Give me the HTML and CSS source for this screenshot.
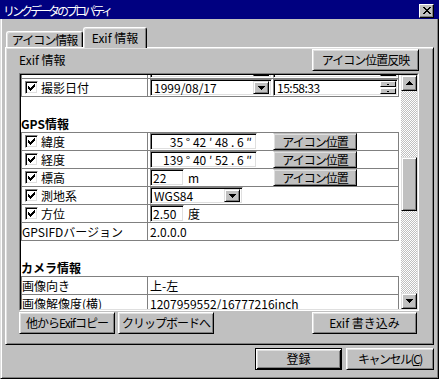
FILE: index.html
```html
<!DOCTYPE html>
<html lang="ja">
<head>
<meta charset="utf-8">
<title>リンクデータのプロパティ</title>
<link rel="stylesheet" href="styles.css">
</head>
<body>
<div class="title">
  <span class="title-text">リンクデータのプロパティ</span>
  <span class="close"><svg width="8" height="7" viewBox="0 0 8 7" shape-rendering="crispEdges"><path d="M0 0h2v1H0zM6 0h2v1H6zM1 1h2v1H1zM5 1h2v1H5zM2 2h4v1H2zM3 3h2v1H3zM2 4h4v1H2zM1 5h2v1H1zM5 5h2v1H5zM0 6h2v1H0zM6 6h2v1H6z" fill="#000"/></svg></span>
</div>
<div class="frame">
  <div class="tabs">
    <div class="tab">アイコン情報</div>
    <div class="tab tab-sel">Exif 情報</div>
  </div>
  <div class="panel">
    <div class="head">
      <span class="head-label">Exif 情報</span>
      <div class="btn btn-reflect">アイコン位置反映</div>
    </div>
    <div class="list">
      <div class="list-in">
        <div class="view">
          <div class="content">
            <div class="group">
              <div class="row">
                <div class="cl"></div>
                <div class="cr">
                  <div class="combo date"><span class="combo-text"></span><span class="dd"></span></div>
                  <div class="spin"><span class="spin-text"></span><span class="spin-btns"><span class="sbtn"><i></i></span><span class="sbtn"><i></i></span></span></div>
                </div>
              </div>
              <div class="row">
                <div class="cl"><span class="chk"><svg width="7" height="7" viewBox="0 0 7 7" shape-rendering="crispEdges"><path d="M6 0h1v1H6zM5 1h2v1H5zM0 2h1v1H0zM4 2h3v1H4zM0 3h2v1H0zM3 3h3v1H3zM0 4h5v1H0zM1 5h3v1H1zM2 6h1v1H2z" fill="#000"/></svg></span><span>撮影日付</span></div>
                <div class="cr">
                  <div class="combo date"><span class="combo-text">1999/08/17</span><span class="dd"><svg width="7" height="4" viewBox="0 0 7 4" shape-rendering="crispEdges"><path d="M0 0h7v1H0zM1 1h5v1H1zM2 2h3v1H2zM3 3h1v1H3z" fill="#000"/></svg></span></div>
                  <div class="spin"><span class="spin-text">15:58:33</span><span class="spin-btns"><span class="sbtn"><i></i></span><span class="sbtn"><i></i></span></span></div>
                </div>
              </div>
            </div>

            <div class="sect">GPS情報</div>

            <div class="group">
              <div class="row">
                <div class="cl"><span class="chk"><svg width="7" height="7" viewBox="0 0 7 7" shape-rendering="crispEdges"><path d="M6 0h1v1H6zM5 1h2v1H5zM0 2h1v1H0zM4 2h3v1H4zM0 3h2v1H0zM3 3h3v1H3zM0 4h5v1H0zM1 5h3v1H1zM2 6h1v1H2z" fill="#000"/></svg></span><span>緯度</span></div>
                <div class="cr">
                  <div class="edit coord">35 ° 42 ′ 48 . 6 ″</div>
                  <div class="btn btn-pos">アイコン位置</div>
                </div>
              </div>
              <div class="row">
                <div class="cl"><span class="chk"><svg width="7" height="7" viewBox="0 0 7 7" shape-rendering="crispEdges"><path d="M6 0h1v1H6zM5 1h2v1H5zM0 2h1v1H0zM4 2h3v1H4zM0 3h2v1H0zM3 3h3v1H3zM0 4h5v1H0zM1 5h3v1H1zM2 6h1v1H2z" fill="#000"/></svg></span><span>経度</span></div>
                <div class="cr">
                  <div class="edit coord">139 ° 40 ′ 52 . 6 ″</div>
                  <div class="btn btn-pos">アイコン位置</div>
                </div>
              </div>
              <div class="row">
                <div class="cl"><span class="chk"><svg width="7" height="7" viewBox="0 0 7 7" shape-rendering="crispEdges"><path d="M6 0h1v1H6zM5 1h2v1H5zM0 2h1v1H0zM4 2h3v1H4zM0 3h2v1H0zM3 3h3v1H3zM0 4h5v1H0zM1 5h3v1H1zM2 6h1v1H2z" fill="#000"/></svg></span><span>標高</span></div>
                <div class="cr">
                  <div class="alt-box"><div class="edit small">22</div><span class="unit">m</span></div>
                  <div class="btn btn-pos">アイコン位置</div>
                </div>
              </div>
              <div class="row">
                <div class="cl"><span class="chk"><svg width="7" height="7" viewBox="0 0 7 7" shape-rendering="crispEdges"><path d="M6 0h1v1H6zM5 1h2v1H5zM0 2h1v1H0zM4 2h3v1H4zM0 3h2v1H0zM3 3h3v1H3zM0 4h5v1H0zM1 5h3v1H1zM2 6h1v1H2z" fill="#000"/></svg></span><span>測地系</span></div>
                <div class="cr">
                  <div class="combo datum"><span class="combo-text">WGS84</span><span class="dd"><svg width="7" height="4" viewBox="0 0 7 4" shape-rendering="crispEdges"><path d="M0 0h7v1H0zM1 1h5v1H1zM2 2h3v1H2zM3 3h1v1H3z" fill="#000"/></svg></span></div>
                </div>
              </div>
              <div class="row">
                <div class="cl"><span class="chk"><svg width="7" height="7" viewBox="0 0 7 7" shape-rendering="crispEdges"><path d="M6 0h1v1H6zM5 1h2v1H5zM0 2h1v1H0zM4 2h3v1H4zM0 3h2v1H0zM3 3h3v1H3zM0 4h5v1H0zM1 5h3v1H1zM2 6h1v1H2z" fill="#000"/></svg></span><span>方位</span></div>
                <div class="cr">
                  <div class="edit small">2.50</div><span class="unit">度</span>
                </div>
              </div>
              <div class="row">
                <div class="cl plain">GPSIFDバージョン</div>
                <div class="cr">2.0.0.0</div>
              </div>
            </div>

            <div class="sect">カメラ情報</div>

            <div class="group">
              <div class="row">
                <div class="cl plain">画像向き</div>
                <div class="cr">上-左</div>
              </div>
              <div class="row">
                <div class="cl plain">画像解像度(横)</div>
                <div class="cr">1207959552/16777216inch</div>
              </div>
            </div>
          </div>
        </div>
        <div class="sb">
          <div class="sb-btn"><svg width="7" height="4" viewBox="0 0 7 4" shape-rendering="crispEdges"><path d="M3 0h1v1H3zM2 1h3v1H2zM1 2h5v1H1zM0 3h7v1H0z" fill="#000"/></svg></div>
          <div class="sb-gap"></div>
          <div class="thumb"></div>
          <div class="sb-fill"></div>
          <div class="sb-btn"><svg width="7" height="4" viewBox="0 0 7 4" shape-rendering="crispEdges"><path d="M0 0h7v1H0zM1 1h5v1H1zM2 2h3v1H2zM3 3h1v1H3z" fill="#000"/></svg></div>
        </div>
      </div>
    </div>
    <div class="foot">
      <div class="btn btn-foot">他からExifコピー</div>
      <div class="btn btn-foot">クリップボードへ</div>
      <div class="btn btn-write">Exif 書き込み</div>
    </div>
  </div>
  <div class="dlg">
    <div class="btn btn-def">登録</div>
    <div class="btn btn-cancel">キャンセル(<u>C</u>)</div>
  </div>
</div>
</body>
</html>
```
FILE: styles.css
```css
* { box-sizing: border-box; margin: 0; padding: 0; }
html, body { width: 439px; height: 379px; overflow: hidden; }
body {
  background: #c0c0c0;
  font-family: "Noto Sans CJK JP", "Noto Sans", sans-serif;
  font-size: 12px;
  line-height: 1;
  color: #000;
  display: flex;
  flex-direction: column;
}

.title {
  flex: none;
  height: 19px;
  background: #000080;
  color: #fff;
  display: flex;
  align-items: center;
  justify-content: space-between;
  padding: 2px 5px 0 3px;
}
.title-text { letter-spacing: -3px; line-height: 17px; }
.close {
  width: 15px;
  height: 14px;
  background: #c0c0c0;
  border: 1px solid;
  border-color: #fff #000 #000 #fff;
  box-shadow: inset -1px -1px #808080;
  display: flex;
  align-items: center;
  justify-content: center;
}

.frame {
  flex: 1;
  display: flex;
  flex-direction: column;
  border-left: 1px solid #dfdfdf;
  border-right: 1px solid #000;
  border-bottom: 1px solid #000;
  box-shadow: inset 1px 0 #fff, inset -1px -1px #808080;
  padding: 0 4px;
}

.tabs {
  flex: none;
  height: 28px;
  display: flex;
  align-items: flex-end;
  padding-left: 1px;
}
.tab {
  height: 16px;
  width: 77px;
  border: 1px solid;
  border-bottom: 0;
  border-color: #fff #000 #000 #fff;
  border-radius: 3px 3px 0 0;
  box-shadow: inset 1px 1px #dfdfdf, inset -1px 0 #808080;
  display: flex;
  align-items: center;
  justify-content: center;
  letter-spacing: -1px;
}
.tab-sel {
  height: 21px;
  width: 64px;
  margin-bottom: -1px;
  position: relative;
  z-index: 1;
  background: #c0c0c0;
  letter-spacing: 0;
  padding-bottom: 1px;
}

.panel {
  flex: none;
  height: 298px;
  border: 1px solid;
  border-color: #fff #000 #000 #fff;
  box-shadow: inset 1px 1px #dfdfdf, inset -1px -1px #808080;
  padding: 1px 14px 10px 13px;
  display: flex;
  flex-direction: column;
}

.head {
  height: 22px;
  display: flex;
  align-items: center;
  justify-content: space-between;
}

.btn {
  background: #c0c0c0;
  border: 1px solid;
  border-color: #fff #000 #000 #fff;
  box-shadow: inset 1px 1px #dfdfdf, inset -1px -1px #808080;
  display: flex;
  align-items: center;
  justify-content: center;
  white-space: nowrap;
}
.btn-reflect { width: 107px; height: 22px; letter-spacing: -1px; }

.list {
  margin-top: 2px;
  height: 238px;
  border: 1px solid;
  border-color: #808080 #fff #fff #808080;
}
.list-in {
  height: 100%;
  border: 1px solid;
  border-color: #000 #dfdfdf #dfdfdf #000;
  background: #fff;
  display: flex;
}
.view { width: 380px; overflow: hidden; }
.content { margin-top: -15px; }

.group { width: 378px; border-top: 1px solid #808080; }
.row {
  height: 18px;
  display: flex;
  border-bottom: 1px solid #808080;
}
.cl {
  width: 127px;
  flex: none;
  border-left: 1px solid #808080;
  border-right: 1px solid #808080;
  display: flex;
  align-items: center;
  gap: 3px;
  white-space: nowrap;
}
.cl.plain { padding-left: 0; }
.cr {
  flex: 1;
  border-right: 1px solid #808080;
  display: flex;
  align-items: center;
  padding-left: 2px;
  white-space: nowrap;
}

.chk {
  width: 13px;
  height: 13px;
  margin-left: 3px;
  flex: none;
  background: #fff;
  border: 1px solid;
  border-color: #808080 #fff #fff #808080;
  box-shadow: inset 1px 1px #000, inset -1px -1px #dfdfdf;
  display: flex;
  align-items: center;
  justify-content: center;
}

.sect {
  height: 35px;
  padding-top: 18px;
  line-height: 17px;
  font-weight: bold;
}

.edit, .combo, .spin {
  height: 17px;
  background: #fff;
  border: 1px solid;
  border-color: #808080 #fff #fff #808080;
  box-shadow: inset 1px 1px #000, inset -1px -1px #dfdfdf;
  display: flex;
  align-items: center;
}
.edit { padding: 0 2px; }
.coord { width: 107px; justify-content: flex-end; padding-right: 4px; }
.small { width: 34px; }
.unit { margin-left: 4px; }
.alt-box { width: 107px; flex: none; display: flex; align-items: center; }

.btn-pos {
  width: 84px;
  height: 17px;
  margin-left: 16px;
  border-top-color: #c0c0c0;
  letter-spacing: -1px;
}

.combo { padding: 2px; }
.combo-text { flex: 1; padding-left: 1px; }
.date { width: 122px; }
.datum { width: 93px; }
.dd {
  width: 16px;
  height: 13px;
  flex: none;
  background: #c0c0c0;
  border: 1px solid;
  border-color: #dfdfdf #000 #000 #dfdfdf;
  box-shadow: inset 1px 1px #fff, inset -1px -1px #808080;
  display: flex;
  align-items: center;
  justify-content: center;
}

.spin { width: 125px; margin-left: 1px; padding: 2px 1px 2px 2px; }
.spin-text { flex: 1; padding-left: 1px; letter-spacing: -0.5px; }
.spin-btns {
  width: 16px;
  height: 13px;
  display: flex;
  flex-direction: column;
  justify-content: space-between;
}
.sbtn {
  height: 6px;
  background: #c0c0c0;
  border: 1px solid;
  border-color: #fff #000 #000 #fff;
  display: flex;
  align-items: center;
  justify-content: center;
}
.sbtn i { width: 2px; height: 1px; background: #000; display: block; }

.sb {
  width: 16px;
  display: flex;
  flex-direction: column;
  background: repeating-conic-gradient(#c0c0c0 0 25%, #fff 0 50%) 0 0 / 2px 2px;
}
.sb-btn, .thumb {
  background: #c0c0c0;
  border: 1px solid;
  border-color: #dfdfdf #000 #000 #dfdfdf;
  box-shadow: inset 1px 1px #fff, inset -1px -1px #808080;
}
.sb-btn {
  height: 16px;
  display: flex;
  align-items: center;
  justify-content: center;
}
.sb-gap { height: 66px; }
.thumb { height: 54px; }
.sb-fill { flex: 1; }

.foot {
  margin-top: 1px;
  height: 22px;
  display: flex;
  gap: 3px;
}
.btn-foot { width: 96px; letter-spacing: -1px; }
.btn-write { width: 105px; margin-left: auto; margin-right: 2px; }

.dlg {
  margin-top: 3px;
  display: flex;
  justify-content: flex-end;
  gap: 4px;
}
.dlg .btn { height: 22px; }
.btn-def {
  width: 87px;
  border-color: #000;
  box-shadow: inset 1px 1px #fff, inset -1px -1px #000, inset 2px 2px #dfdfdf, inset -2px -2px #808080;
}
.btn-cancel { width: 88px; letter-spacing: -1.5px; }
```
